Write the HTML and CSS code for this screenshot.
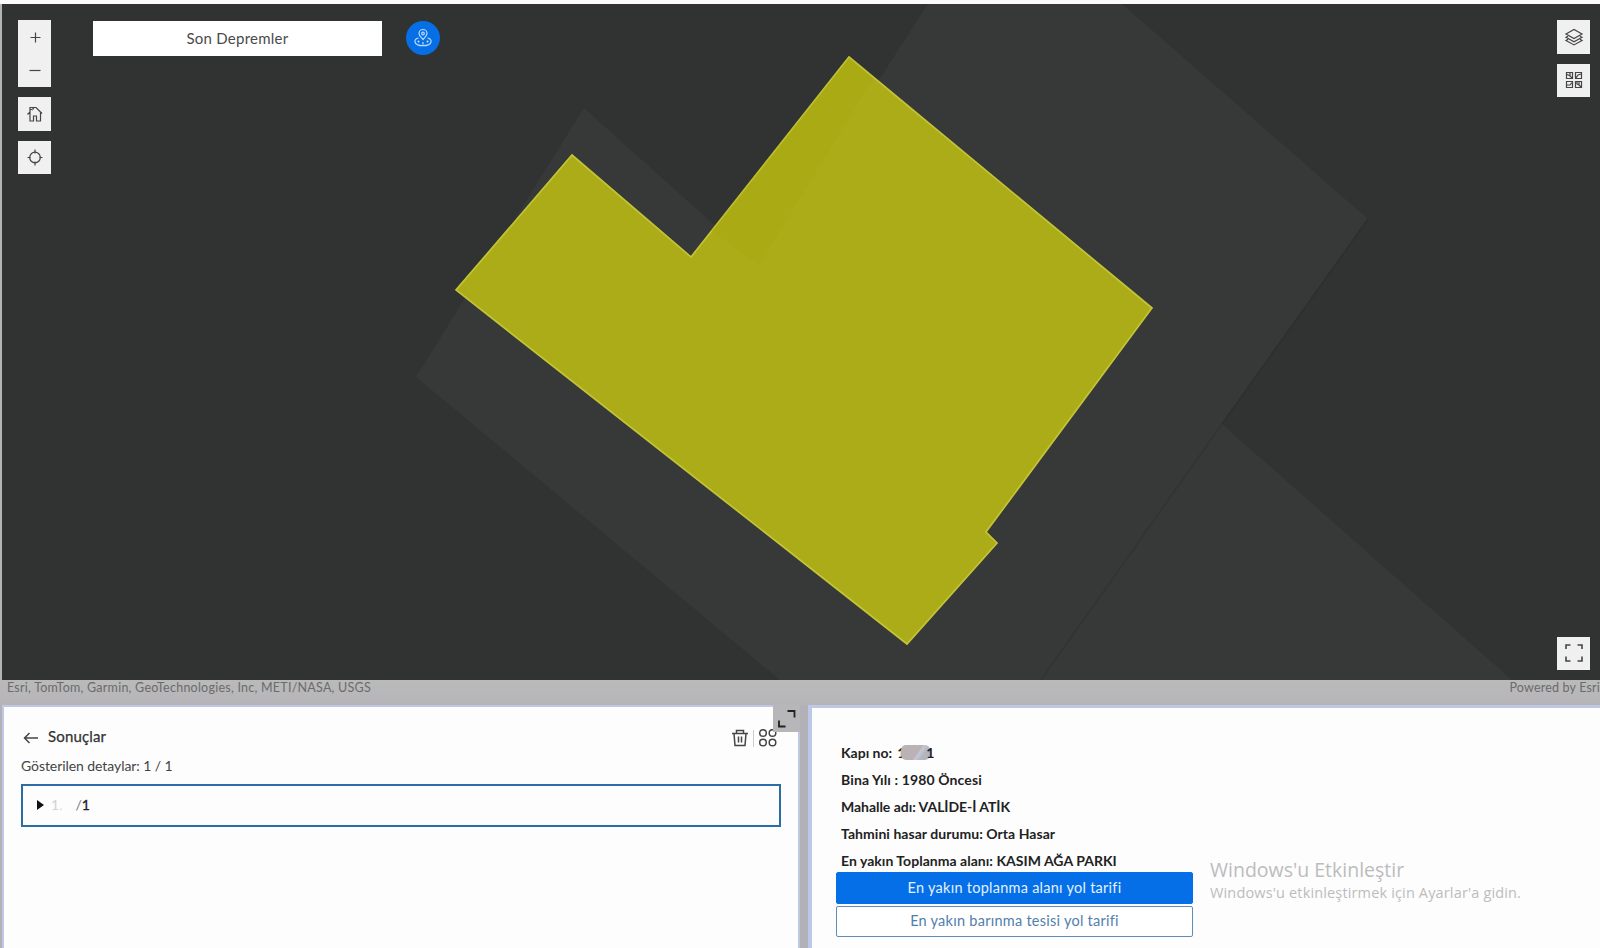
FILE: index.html
```html
<!DOCTYPE html>
<html lang="tr">
<head>
<meta charset="utf-8">
<title>Son Depremler</title>
<link rel="stylesheet" href="styles.css">
</head>
<body>
<div class="app">
  <main class="map">
    <svg class="map-canvas" viewBox="2 4 1598 676" preserveAspectRatio="none">
      <path class="parcel" d="M584 108 759 265 928 4H1122L1368 219 1222 424 1512 680H780L416 377Z"/>
      <path class="shade" d="M1368 219 1222 424"/>
      <path class="seam" d="M1222 424 1041 680"/>
      <path class="building" d="M849 57 1152 308 986 532 997 543 907 644 456 290 572 155 691 257Z"/>
      <path class="under" d="M849 57 873 78 759 265 711 230Z"/>
    </svg>
    <div class="tools tools-left">
      <div class="zoom">
        <button class="tool"><svg width="34" height="34"><path d="M12.500 17.500h10M17.500 12.500v10"/></svg></button>
        <button class="tool"><svg width="34" height="34"><path d="M11.500 17.500h11"/></svg></button>
      </div>
      <button class="tool"><svg width="34" height="34"><path d="M9.500 17.500 12 15V10.500h3v1.500L16 10.500h2L24 16.500M12 15.500v8.500h3.500v-5h3v5h4v-8.500M12 12.500h2"/></svg></button>
      <button class="tool"><svg width="34" height="34"><circle cx="17" cy="17.500" r="5.300"/><path d="M17 9.500v4M17 21.500v4M9.500 17.500h3M21.500 17.500h3"/></svg></button>
    </div>
    <button class="quakes"><span class="t-quakes">Son Depremler</span></button>
    <button class="assembly"><svg width="34" height="34"><path d="M17 18.500c-2.200-2.600-4-4-4-6a4 4 0 0 1 8 0c0 2-1.800 3.400-4 6Z"/><circle cx="17" cy="12.500" r="1.300"/><path d="M12.500 17c-2.500.5-4 2-3.500 4 .6 2.500 4 3.700 8 3.700s7.400-1.200 8-3.700c.5-2-1-3.500-3.500-4M11.500 20.500h2M20.500 20.500h2M17 21v2.500M12.500 19.500v2M21.500 19.500v2"/></svg></button>
    <div class="tools tools-right">
      <button class="tool"><svg width="34" height="34"><path d="M9 14 17 9.500 25 14 17 18.500ZM11 16.200 9 17.300 17 21.800 25 17.300 23 16.200M11 19.300 9 20.400 17 24.900 25 20.400 23 19.300"/></svg></button>
      <button class="tool"><svg width="34" height="34"><path d="M9.500 9.500h6v6h-6ZM18.500 9.500h6v6h-6ZM9.500 18.500h6v6h-6ZM18.500 18.500h6v6h-6ZM10 11.500l2.500 1 2.500 2.500M13 10v3M19 15l2-3 3-1M10 22h3l2-2.500M20 19v2l2 1 2 2M22 19v3"/></svg></button>
      <button class="tool full"><svg width="34" height="34"><path class="thick" d="M9 13V9H13.500M20.500 9H25V13M25 20.500V25H20.500M13.500 25H9V20.500"/></svg></button>
    </div>
  </main>
  <footer class="credits"><span class="t-esri">Esri, TomTom, Garmin, GeoTechnologies, Inc, METI/NASA, USGS</span><span class="t-power">Powered by Esri</span></footer>
  <div class="panels">
    <section class="panel results">
      <div class="head">
        <svg class="back" width="16" height="14"><path d="M15 7H1.500M6.500 2 1.500 7l5 5"/></svg>
        <h1 class="t-head">Sonuçlar</h1>
        <svg class="trash" width="16" height="18"><path d="M0 4.500h16M4.500 4.500V1.500h7v3M2 4.500 3 16.500H13L14 4.500M6.500 7.500v6M9.500 7.500v6"/></svg>
        <i class="divider"></i>
        <svg class="grid" width="18" height="18"><circle cx="4" cy="4" r="3.300"/><circle cx="13.500" cy="4" r="3.300"/><circle cx="4" cy="13.500" r="3.300"/><circle cx="13.500" cy="13.500" r="3.300"/></svg>
      </div>
      <p class="count"><span class="t-count">Gösterilen detaylar: 1 / 1</span></p>
      <div class="row"><svg width="7" height="10"><path class="solid" d="M0 0 7 5 0 10Z"/></svg><span class="faint">1</span><span class="dot">.</span><span class="slash">/</span><span class="one">1</span></div>
      <div class="expand"><svg width="27" height="27"><path class="heavy" d="M14.500 6H21.500V12.500M6 15.500V21.500H12.500"/></svg></div>
    </section>
    <section class="panel details">
      <div class="facts">
        <p>Kapı no: <span class="door">1<i class="smudge"></i>1</span></p>
        <p><span class="t-f2">Bina Yılı : 1980 Öncesi</span></p>
        <p><span class="t-f3">Mahalle adı: VALİDE-İ ATİK</span></p>
        <p><span class="t-f4">Tahmini hasar durumu: Orta Hasar</span></p>
        <p><span class="t-f5">En yakın Toplanma alanı: KASIM AĞA PARKI</span></p>
      </div>
      <button class="route primary"><span>En yakın toplanma alanı yol tarifi</span></button>
      <button class="route"><span>En yakın barınma tesisi yol tarifi</span></button>
    </section>
  </div>
  <aside class="watermark"><div class="t-w1">Windows'u Etkinleştir</div><div class="t-w2">Windows'u etkinleştirmek için Ayarlar'a gidin.</div></aside>
</div>
</body>
</html>
```

FILE: styles.css
```css
* { box-sizing: border-box; }
body { margin: 0; background: #fdfdfd; font-family: Lato, "Open Sans", sans-serif; color: #333; }
button { font: inherit; padding: 0; border: 0; }
p, h1 { margin: 0; font-weight: normal; }
svg { display: block; fill: none; stroke: #454545; stroke-width: 1.2; }
span { white-space: nowrap; }
.app { position: relative; width: 1600px; height: 948px; overflow: hidden; display: flex; flex-direction: column; padding-top: 4px; background: #fcfafb; }

.map { position: relative; height: 676px; flex: none; border-left: 2px solid #b3b3b3; background: #313332; }
.map-canvas { width: 1598px; height: 676px; }
.parcel { fill: #373938; stroke: none; }
.shade { stroke: #2d2f2e; stroke-width: 1.5; }
.seam { stroke: #323433; stroke-width: 1.5; }
.building { fill: #abac17; stroke: #c3c437; stroke-width: 1.7; }
.under { fill: rgba(160, 158, 10, .18); stroke: none; }
.tools { position: absolute; top: 16px; display: flex; flex-direction: column; gap: 10px; }
.tools-left { left: 16px; }
.tools-right { right: 10px; bottom: 10px; }
.tool { display: block; width: 33px; height: 33.500px; background: #f0f0f0; }
.tool svg { margin-top: -.5px; }
.full { margin-top: auto; }
.thick { stroke-width: 1.6; }
.quakes { position: absolute; left: 91px; top: 17px; width: 289px; height: 35px; padding-bottom: 2px; background: #fff; color: #4a4a4a; font-size: 15px; letter-spacing: .25px; }
.assembly { position: absolute; left: 403.500px; top: 16.500px; width: 34px; height: 34px; border-radius: 50%; background: #076fe5; }
.assembly svg { stroke: #b9dcff; }

.credits { display: flex; justify-content: space-between; height: 25px; flex: none; padding: 0 0 0 7px; background: linear-gradient(#bababa, #b6b4b8); color: #6b6b6b; font-size: 12.500px; line-height: 15px; }
.t-esri { letter-spacing: .24px; }
.t-power { letter-spacing: .18px; }
.panels { flex: 1; display: grid; grid-template-columns: 798px 1fr; gap: 8px; padding-left: 2px; background: #b1b1b7; }
.panel { background: #fdfdfe; border: 0 solid #bcc8e6; }
.results { position: relative; border-width: 2px 2px 0 2px; padding: 20px 17px 0; }
.details { border-width: 3px 0 0 4px; padding: 31px 0 0 24px; }
.head { display: flex; align-items: center; height: 22px; padding-right: 4px; }
.back { margin-left: 2px; stroke-width: 1.5; }
.t-head { margin: -5px 0 0 9px; font-size: 15px; font-weight: normal; color: #333; letter-spacing: .15px; -webkit-text-stroke: .25px #333; white-space: nowrap; }
.trash { margin-left: auto; stroke-width: 1.5; }
.divider { width: 1px; height: 17px; margin: 0 5px; background: #ccc; }
.grid { stroke-width: 1.5; }
.count { margin-top: 7px; height: 20px; font-size: 14px; line-height: 20px; letter-spacing: -.07px; color: #444; }
.row { display: flex; align-items: center; width: 760px; height: 43px; margin-top: 8px; padding: 0 0 2px 14px; border: 2px solid #2d6da6; font-size: 14px; line-height: 20px; }
.solid { fill: #111; stroke: none; }
.faint { margin-left: 7px; color: #d2d2d2; }
.dot { color: #ddd; }
.slash { margin-left: 13px; color: #777; }
.one { color: #222; -webkit-text-stroke: .3px #222; }
.expand { position: absolute; right: -2px; top: -2px; width: 27px; height: 27px; background: #b7b7b9; }
.heavy { stroke: #222; stroke-width: 1.8; }
.facts { padding-left: 5px; font-size: 14px; line-height: 27px; height: 133px; color: #222; }
.facts p { height: 27px; white-space: nowrap; font-weight: bold; }
.facts p:first-child { display: flex; align-items: center; }
.t-f2 { letter-spacing: .12px; }
.t-f3 { letter-spacing: -.04px; }
.t-f4 { letter-spacing: .05px; }
.t-f5 { letter-spacing: .03px; }
.door { display: flex; align-items: center; margin-left: 5px; }
.smudge { width: 29px; height: 15px; margin: 0 -4px 0 -4px; border-radius: 5px; background: linear-gradient(125deg, #bbb2b5 55%, #c4c8d8 60%, #b4b4bd 75%); }
.route { display: block; width: 357px; height: 31px; margin-bottom: 2px; padding-bottom: 2px; border: 1px solid #5e8db8; border-radius: 2px; background: #fff; color: #527eae; font-size: 14.500px; letter-spacing: .26px; }
.primary { height: 32px; background: #056fe8; border-color: #056fe8; color: #e4f1ff; }
.watermark { position: absolute; left: 1210px; top: 856px; color: #bcbcbc; font-family: "Open Sans", "Noto Sans", sans-serif; white-space: nowrap; }
.t-w1 { font-size: 19.500px; line-height: 28px; }
.t-w2 { font-size: 14.500px; line-height: 18px; letter-spacing: .15px; }
```
